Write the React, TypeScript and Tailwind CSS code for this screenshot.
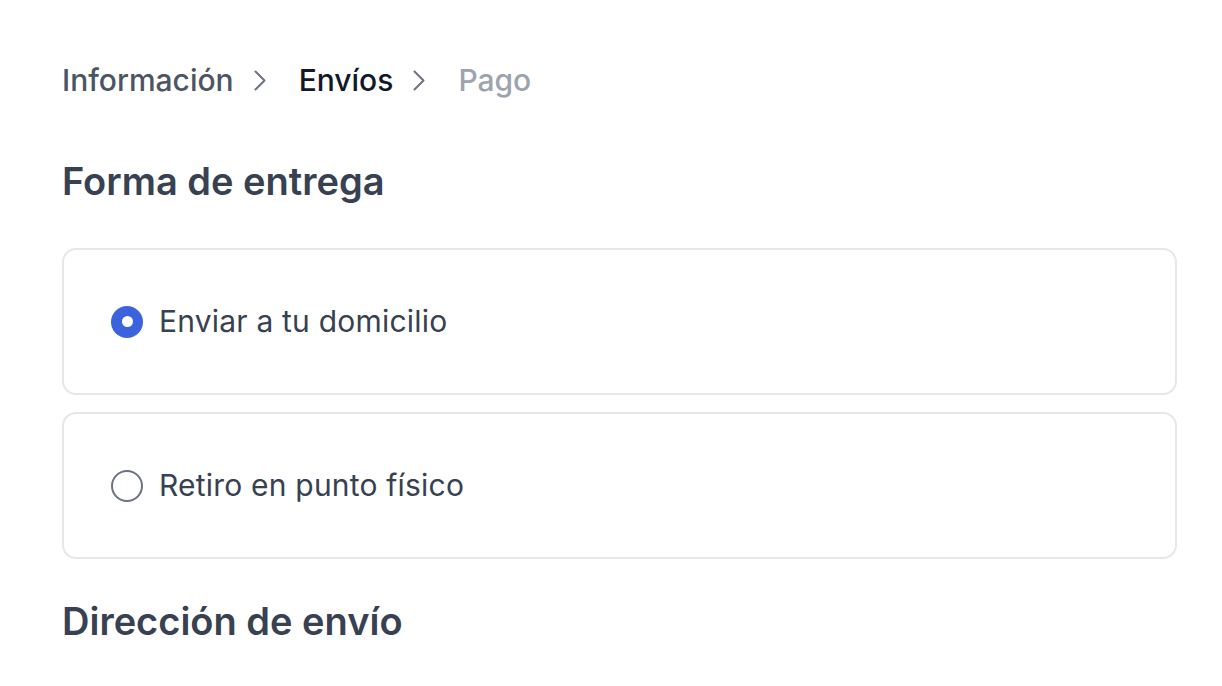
import React from "react";

function Chevron() {
  return (
    <svg width="12" height="21" viewBox="0 0 12 21" fill="none" stroke="#6b7280" strokeWidth="2" strokeLinecap="round" strokeLinejoin="round" className="ml-[20px] mr-[33px]">
      <path d="M1.5 1.5l9 9-9 9" />
    </svg>
  );
}

function Option({ label, checked }: { label: string; checked: boolean }) {
  return (
    <label className="flex h-[147px] items-center rounded-[14px] border-2 border-[#e5e7eb] pl-[47px]">
      {checked ? (
        <span className="flex h-[32px] w-[32px] items-center justify-center rounded-full bg-[#3b63dd]">
          <span className="h-[11px] w-[11px] rounded-full bg-white" />
        </span>
      ) : (
        <span className="h-[32px] w-[32px] rounded-full border-2 border-[#6b7280] bg-white" />
      )}
      <span className="ml-[16px] text-[30px] tracking-[0.2px] text-[#374151]">{label}</span>
    </label>
  );
}

export default function App() {
  return (
    <div className="min-h-screen bg-white pl-[62px] pr-[45px] pt-[58px]" style={{ fontFamily: "Inter, 'Noto Sans', sans-serif" }}>
      <nav className="flex h-[44px] items-center text-[30px] font-medium">
        <span className="text-[#4b5563]">Información</span>
        <Chevron />
        <span className="text-[#111827]">Envíos</span>
        <Chevron />
        <span className="text-[#9ca3af]">Pago</span>
      </nav>
      <h2 className="mt-[49px] text-[38px] font-semibold leading-[60px] text-[#374151]">Forma de entrega</h2>
      <div className="mt-[37px] flex flex-col gap-[17px]">
        <Option label="Enviar a tu domicilio" checked />
        <Option label="Retiro en punto físico" checked={false} />
      </div>
      <h2 className="mt-[32px] text-[38px] font-semibold leading-[60px] text-[#374151]">Dirección de envío</h2>
    </div>
  );
}
